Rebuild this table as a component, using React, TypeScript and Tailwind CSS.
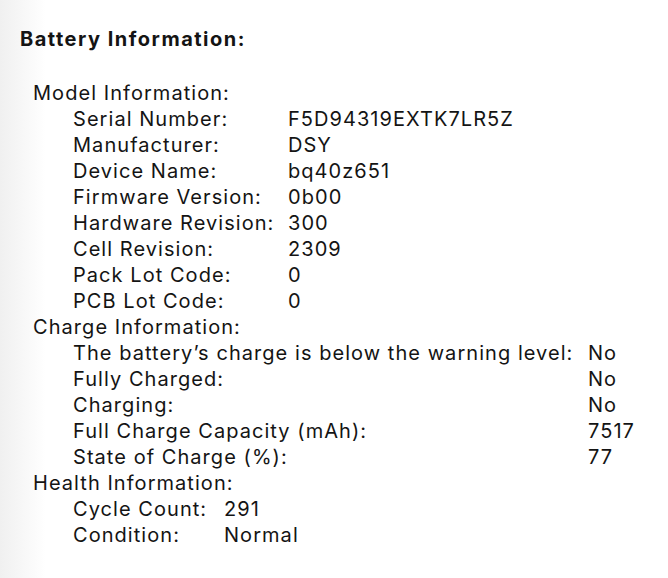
import React from "react";

type Row = [string, string];

const model: Row[] = [
  ["Serial Number:", "F5D94319EXTK7LR5Z"],
  ["Manufacturer:", "DSY"],
  ["Device Name:", "bq40z651"],
  ["Firmware Version:", "0b00"],
  ["Hardware Revision:", "300"],
  ["Cell Revision:", "2309"],
  ["Pack Lot Code:", "0"],
  ["PCB Lot Code:", "0"],
];

const charge: Row[] = [
  ["The battery\u2019s charge is below the warning level:", "No"],
  ["Fully Charged:", "No"],
  ["Charging:", "No"],
  ["Full Charge Capacity (mAh):", "7517"],
  ["State of Charge (%):", "77"],
];

const health: Row[] = [
  ["Cycle Count:", "291"],
  ["Condition:", "Normal"],
];

function Section({ title, rows, labelW }: { title: string; rows: Row[]; labelW: string }) {
  return (
    <div className="flex flex-col">
      <div className="pl-[13px] h-[26px]">{title}</div>
      {rows.map(([k, v]) => (
        <div key={k} className="flex pl-[53px] h-[26px] whitespace-nowrap">
          <div className={labelW}>{k}</div>
          <div>{v}</div>
        </div>
      ))}
    </div>
  );
}

export default function App() {
  return (
    <div
      className="min-h-[578px] w-full bg-[linear-gradient(to_right,#f0f0f0,#ffffff_46px)] text-[#141414] pl-5 pt-[26px]"
      style={{ fontFamily: "Inter, 'Noto Sans', sans-serif" }}
    >
      <div className="text-[20px] leading-[26px] font-bold tracking-[1.5px]">Battery Information:</div>
      <div className="mt-[28px] text-[20px] leading-[26px] tracking-[1.05px]">
        <Section title="Model Information:" rows={model} labelW="w-[215px]" />
        <Section title="Charge Information:" rows={charge} labelW="w-[515px]" />
        <Section title="Health Information:" rows={health} labelW="w-[151px]" />
      </div>
    </div>
  );
}
